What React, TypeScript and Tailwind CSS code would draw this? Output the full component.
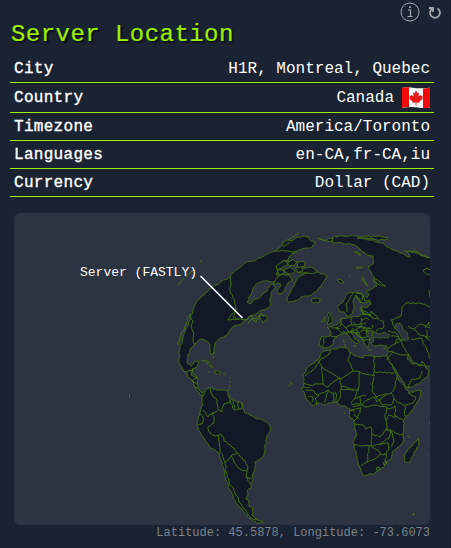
import React from 'react';

type Pt = [number, number];

// Parses "x,y x,y" and adds small deterministic bends so coastlines look natural.
function rough(src: string, closed: boolean, amp: number): string {
  const pts: Pt[] = src.trim().split(/\s+/).map((p) => p.split(',').map(Number) as Pt);
  const out: Pt[] = [];
  const n = pts.length;
  const last = closed ? n : n - 1;
  for (let i = 0; i < last; i++) {
    const a = pts[i];
    const b = pts[(i + 1) % n];
    const len = Math.hypot(b[0] - a[0], b[1] - a[1]) || 1;
    const steps = Math.max(1, Math.round(len / 2.5));
    for (let s = 0; s < steps; s++) {
      const t = s / steps;
      const h = Math.sin(a[0] * 12.9 + a[1] * 78.2 + s * 37.7) * 43758.5;
      const d = s === 0 ? 0 : (h - Math.floor(h) - 0.5) * 2 * amp;
      out.push([
        a[0] + (b[0] - a[0]) * t - ((b[1] - a[1]) / len) * d,
        a[1] + (b[1] - a[1]) * t + ((b[0] - a[0]) / len) * d,
      ]);
    }
  }
  if (!closed) out.push(pts[n - 1]);
  return 'M' + out.map((p) => p[0].toFixed(1) + ' ' + p[1].toFixed(1)).join('L') + (closed ? 'Z' : '');
}

const land = [
  // North and Central America
  '190,320 193,309 198,300 205,293 213,287 222,281 230,277 233,273 239,268 245,263 253,261 260,258 268,254 275,251 279,248 283,245 282,243 287,240 292,241 297,237 304,236 309,237 309,239 316,243 310,248 302,249 293,253 290,256 288,260 282,261 281,265 276,267 278,271 276,274 280,277 275,282 270,282 265,281 258,283 253,288 251,295 247,302 250,304 253,300 258,299 263,294 267,291 269,287 272,284 276,287 271,293 270,299 271,304 268,308 260,311 256,314 250,316 247,319 243,322 239,325 234,326 230,330 228,334 225,336 219,339 215,343 214,348 213,354 211,355 210,350 210,344 206,341 202,339 198,341 194,345 190,350 188,355 187,363 191,366 194,362 199,361 197,367 192,369 193,374 198,378 197,384 198,389 202,393 205,391 205,395 200,395 196,390 194,384 192,380 188,377 187,372 183,370 180,365 179,358 180,348 183,338 186,329',
  // South America
  '205,391 208,388 212,387 213,389 217,390 222,390 228,392 229,396 232,400 237,402 242,403 243,408 245,413 250,415 255,418 263,420 268,423 270,426 271,430 267,436 266,441 265,448 264,455 260,459 255,462 255,470 252,476 253,481 250,484 251,488 247,491 248,495 246,499 249,502 249,507 253,508 252,515 256,519 263,522 258,524 253,521 247,516 242,510 237,504 233,497 230,490 226,480 224,470 221,460 219,453 215,450 210,448 205,440 200,432 197,425 198,417 200,412 203,405 202,400 203,396',
  // Eurasia, running clockwise from the north-eastern Siberian coast
  '333,237 343,236 352,235 358,237 365,239 371,240 378,242 385,245 391,249 400,253 410,257 407,252 414,252 420,255 425,256 434,260 434,366 428,366 422,365 415,363 411,359 408,355 407,359 412,364 416,363 420,366 422,361 426,368 429,371 427,377 421,382 414,386 407,388 404,382 400,377 396,370 392,364 388,361 387,355 388,350 387,346 380,345 374,346 371,343 374,340 372,336 373,331 366,330 366,334 370,338 369,344 368,348 365,345 364,340 360,337 355,333 351,331 354,338 359,341 357,344 352,340 347,334 342,334 337,336 334,339 332,345 327,348 322,348 319,345 321,337 330,336 331,332 329,329 327,327 332,327 336,325 340,322 341,318 347,318 352,317 360,316 364,313 361,311 361,307 366,308 371,304 370,301 362,303 359,298 356,295 353,302 354,308 351,315 347,317 344,312 339,312 338,305 343,302 347,294 350,292 356,292 363,295 367,298 369,294 366,292 370,290 374,287 377,286 373,281 375,278 371,272 368,267 373,264 373,256 367,255 363,252 360,249 354,245 343,243 333,243 332,240',
  // Africa
  '310,365 318,360 320,356 324,351 330,350 338,348 348,348 350,353 356,356 362,358 365,355 373,356 380,357 387,356 389,361 393,368 398,378 405,388 409,393 415,391 421,390 420,397 416,404 411,411 405,417 403,421 404,429 403,436 403,442 397,448 392,452 392,459 386,462 384,467 375,473 368,475 363,476 361,470 358,464 357,457 354,448 353,442 357,435 355,429 354,422 349,415 350,409 345,406 341,406 337,402 331,403 325,405 318,403 314,406 308,401 305,395 302,390 304,384 303,375 306,370',
  // Greenland
  '300,276 295,283 291,290 287,300 289,303 295,301 301,297 309,296 316,292 321,287 324,281 327,277 324,274 316,272 308,273',
  // Madagascar and the British Isles
  '418,438 419,443 413,456 409,463 404,461 405,454 409,448 413,445',
  '327,323 329,318 327,315 329,312 330,316 333,320 332,323 328,325',
  '321,321 325,317 325,320 323,322',
  // Iceland, Svalbard and Novaya Zemlya
  '311,300 314,298 320,299 319,303 314,303',
  '337,280 341,279 344,282 340,283',
  '373,279 379,281 386,286 384,286 377,284',
  // Arctic islands
  '318,238 324,240 333,238 332,241 322,240',
  '357,238 366,236 378,236 388,238 384,240 374,239',
  '276,266 282,262 289,261 288,265 282,268 277,270',
  '288,262 293,259 297,262 294,266 289,266',
  '297,262 303,261 305,266 299,268',
  '299,271 303,268 309,267 315,269 317,272 308,273 301,273',
  '295,268 301,267 303,271 298,273',
  '273,284 277,278 283,274 289,275 293,280 288,283 285,290 280,294 277,291 281,286 278,283',
  '284,269 290,267 295,271 291,274 286,273',
  '277,271 283,270 284,274 279,275',
  // Newfoundland, Cuba and Hispaniola
  '259,317 265,315 267,320 263,323',
  '202,360 208,361 213,368 210,366 205,361',
  '214,371 219,371 221,373 216,374',
  '356,268 363,267 359,268',
  '354,252 359,255 361,255 358,252',
];

const seas = [
  '373,331 379,334 384,332 390,335 388,338 379,338 372,337',
  '396,324 400,323 403,329 407,332 409,339 404,341 400,334 395,328',
  '363,278 364,282 368,286 366,284 362,280',
];

const borders = [
  // Americas
  '230,277 231,284 230,291 234,299 236,308 233,317 239,319 247,320',
  '275,251 285,251 297,252', '228,320 231,315 233,313',
  '190,315 193,321 191,326 194,333 193,340 195,345',
  '247,320 251,315 255,319 261,313 264,317', '228,320 239,319',
  '248,323 252,318 256,322 260,316', '178,345 181,335 186,324 190,314',
  '187,372 193,370 191,375 197,378 192,381 198,384', '194,386 198,388',
  '210,388 213,397 217,400 218,409 222,412 224,404 231,401',
  '203,410 208,417 213,412 214,423 208,427 210,433 215,436 221,434 224,441 234,448 237,453 231,456 225,462',
  '229,395 230,402 234,410 242,409 242,403', '233,401 235,409', '238,402 239,409',
  '199,413 203,417 202,424 198,425', '218,410 213,414',
  '218,435 220,450 225,462 227,477 235,493 242,506 250,517 256,520',
  '237,453 245,461 248,468 246,471 240,469 234,462 231,456',
  '248,470 246,476 252,479', '246,477 250,483',
  // Europe
  '353,293 346,304 347,312', '355,295 361,303', '356,293 362,294 362,300',
  '362,315 368,314 373,318 383,321 384,327 376,331', '361,310 367,312 370,316',
  '351,318 352,325 361,327 361,318', '341,319 341,325 336,328 342,333',
  '341,323 346,328 352,325', '346,328 348,332 355,330 360,327 370,328',
  '332,328 340,329', '331,336 337,337', '324,338 323,347',
  '350,331 358,333 363,330 369,333', '356,334 361,338 367,337', '362,328 371,329 373,325',
  '357,330 360,336 363,341', '364,340 371,339', '342,332 348,333 353,328',
  '353,322 358,325 366,323', '361,320 365,318 369,320',
  '363,296 365,301 370,300', '362,306 363,313 370,316 371,311 378,318',
  // Central Asia and the Middle East
  '395,329 391,320 400,317 402,308 406,303 420,303 430,307',
  '408,326 414,329 421,324 430,328', '414,330 420,335 430,337',
  '425,328 429,322 431,332', '388,331 396,333 400,340', '391,336 399,337',
  '388,348 395,344 401,340 405,349 409,355', '388,352 394,352 402,355 408,355',
  '395,344 397,339 403,340', '411,339 421,338 427,350 430,359',
  '408,388 411,380 420,378 422,371', '387,360 393,352', '427,330 426,338 431,342',
  '423,270 427,268 430,270', '423,270 426,274 431,275', '429,290 431,299',
  // Africa
  '330,350 329,354 320,360 312,371 305,376', '318,361 322,367 341,379 353,371 351,365 348,361 350,353',
  '322,367 323,384 310,385 304,383', '323,384 327,387 334,381 340,378 341,385 354,390',
  '353,371 360,372 374,376 374,356', '375,372 394,373', '360,372 359,384 356,396 351,403',
  '374,377 372,390 376,397 383,395 391,393 395,387 397,377', '341,386 340,398 337,403',
  '328,390 325,403', '333,394 334,403', '336,393 336,402', '319,395 315,399 317,405',
  '305,390 312,390 318,395 326,391 336,393', '303,388 310,387', '308,397 313,397 312,402',
  '341,389 352,390 359,390', '353,407 361,405 367,400 374,397', '350,411 360,408',
  '376,397 383,405 391,405 394,399 391,393', '394,399 403,405 413,403 416,397 408,393',
  '359,396 361,404 366,407 377,405 387,407', '387,407 385,418 387,428 398,434 403,434',
  '405,406 405,416', '387,409 395,406 395,416 403,420', '361,407 358,417 354,421',
  '355,424 363,425 366,429 371,427 372,434 380,437 387,428',
  '372,434 371,446 354,445', '371,446 380,444 389,438 391,431 385,429',
  '369,446 367,462 361,466', '367,462 376,458 380,454 386,454 389,448 388,443 379,445',
  '371,446 379,451 381,454', '391,431 394,441 391,447', '386,454 386,463',
  '384,461 387,463 384,465 383,462', '377,467 380,468 378,471 376,469 377,467',
  '354,399 361,396 366,396', '374,397 377,402 386,395', '386,421 389,415 396,417',
  '351,404 360,404', '349,410 355,412', '354,414 359,419',
];

const specks = [
  '178,285 184,278', '186,277 193,270', '200,262 202,260', '129.5,394.5 129.5,397.5',
  '213,353 215,353', '212,358 214,356', '208,372 210,372', '223,374 225,374',
  '229,377 231,378', '230,381 230,383', '231,386 229,387', '228,391 229,389',
  '289,382 291,383', '292,383 292,385', '290,386 288,385', '344,412 345,414',
  '349,276 350,276', '407,436 409,437', '427,455 428,454.5', '429,423 430,423',
  '412.5,514.5 414,513 414,515 412.5,515', '288,240 299,233', '283,247 290,242',
  '368,350 372,350', '383,349 385,348', '353,346 357,346', '344,339 344,343', '345,344 345,347',
  '404,251 415,251 422,255 429,258', '362,276 365,282 368,286',
];

function Globe() {
  return (
    <svg className="block h-[312px] w-[416px]" viewBox="14 213 416 312">
      <g fill="#111927" stroke="#457311" strokeWidth="0.9" strokeLinejoin="round">
        {land.map((p) => <path key={p} d={rough(p, true, 0.85)} />)}
      </g>
      <g fill="#2c3341" stroke="#3f6816" strokeWidth="0.8">
        {seas.map((p) => <path key={p} d={rough(p, true, 0.6)} />)}
      </g>
      <g fill="none" stroke="#4a7d0d" strokeWidth="0.9">
        {borders.map((p) => <path key={p} d={rough(p, false, 0.8)} />)}
        {specks.map((p) => <path key={p} d={rough(p, false, 0.3)} />)}
      </g>
      <path d="M200.5 276L242.5 318" stroke="#fff" strokeWidth="1.6" />
      <text x="80" y="276" fill="#fff" fontSize="13" textLength="117" className="font-['Liberation_Mono',monospace]">Server (FASTLY)</text>
    </svg>
  );
}

function Flag() {
  return (
    <svg className="ml-2 inline-block h-[22px] w-7" viewBox="0 0 28 22">
      <path d="M0 1Q5-.3 11 .8T28 .8V20.5Q22 21.6 16 20.5T0 21Z" fill="#f8f8f8" />
      <path d="M0 1Q4 0 7 .3V20Q4 20 0 21ZM21 1.6Q25 1.5 28 .8V20.5Q24 21.4 21 21.3Z" fill="#f20a0a" />
      <path d="M14 3.5l1.5 2.8 1.5-.7-.6 4 2-1.8.5 1.2 2-.2-.8 2.3.8.6-3.5 2.8.3 1.3-3.3-.4v3h-.8v-3l-3.3.4.3-1.3L7.1 11.7l.8-.6-.8-2.3 2 .2.5-1.2 2 1.8-.6-4 1.5.7Z" fill="#e81818" />
    </svg>
  );
}

const rows = [
  { label: 'City', value: 'H1R, Montreal, Quebec' },
  { label: 'Country', value: 'Canada', flag: true },
  { label: 'Timezone', value: 'America/Toronto' },
  { label: 'Languages', value: 'en-CA,fr-CA,iu' },
  { label: 'Currency', value: 'Dollar (CAD)' },
];

export default function App() {
  return (
    <main className="relative h-[548px] w-[451px] overflow-hidden border-r border-[#141d2b] bg-[#1a2332] pl-[10px] pr-4 pt-[18px] font-['Liberation_Mono',monospace] text-white">
      <div className="absolute right-2 top-[2px] flex items-center gap-2 text-[#a5a9af]">
        <svg className="size-5" viewBox="0 0 20 20" fill="none" stroke="currentColor">
          <circle cx="10" cy="10" r="9" strokeWidth="1" />
          <path d="M8 8h2.5v6M7.5 14.5h5" strokeWidth="1.2" />
          <circle cx="10" cy="5.3" r="1" fill="currentColor" stroke="none" />
        </svg>
        <svg className="mt-[2px] h-[14px] w-[14px]" viewBox="0 0 14 14" fill="none" stroke="currentColor" strokeWidth="1.8">
          <path d="M9.500 2.500a5 5 0 1 1-5 0M1 2h4v4" />
        </svg>
      </div>
      <h2 className="h-[37px] pl-px text-2xl leading-[33px] tracking-[0.45px] text-[#9fef00] [-webkit-text-stroke:0.2px_#9fef00] [text-shadow:1px_1px_1px_#0a0e16,2px_2px_1px_#10151f]">Server Location</h2>
      <div className="w-[424px]">
        {rows.map((row) => (
          <div key={row.label} className={`flex items-center justify-between border-b border-[#9fef00] pl-1 pr-1 ${row.flag ? 'h-[30px]' : 'h-7'}`}>
            <span className="pt-px text-base leading-none tracking-[0.3px] [-webkit-text-stroke:0.35px_white]">{row.label}</span>
            <span className={`flex items-center text-base leading-none ${row.flag ? '' : 'pt-px'}`}>{row.value}{row.flag && <Flag />}</span>
          </div>
        ))}
      </div>
      <div className="ml-1 mt-4 w-[416px] overflow-hidden rounded-md bg-[#2c3341]">
        <Globe />
      </div>
      <p className="w-[420px] text-right text-xs leading-[17px] text-[#7c828b]">Latitude: 45.5878, Longitude: -73.6073</p>
    </main>
  );
}
